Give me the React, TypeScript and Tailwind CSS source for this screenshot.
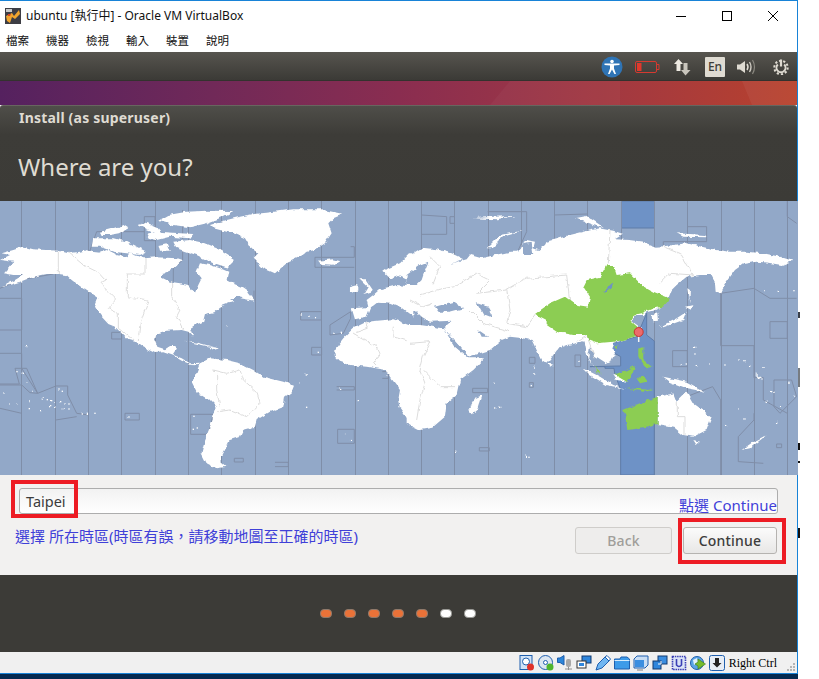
const UI = '"Noto Sans", "Noto Sans CJK TC", sans-serif';

const MENUS = ["檔案", "機器", "檢視", "輸入", "裝置", "說明"];

// polygons below are in 3x crop coordinates, the left and right half of the map each have their own origin
const TZ_X = [21, 55, 88, 121, 155, 188, 221, 255, 288, 321, 355, 388, 421, 454, 488, 521, 554, 587, 621, 654, 687, 721, 754, 787];

const LAND_LEFT = [
  "5,160 40,150 70,140 100,148 175,152 205,160 240,155 262,150 275,155 300,158 320,150 350,165 375,172 390,160 430,175 470,172 530,175 545,180 520,205 495,215 483,232 510,245 540,250 565,255 585,278 595,255 605,235 590,215 600,190 630,195 660,205 685,215 680,240 700,250 730,262 745,272 735,290 715,285 690,300 700,305 660,320 640,340 615,345 610,365 585,375 570,385 580,410 565,395 545,390 500,392 470,400 465,420 472,440 495,448 515,435 530,435 530,450 520,465 545,475 570,490 600,488 595,493 570,492 545,482 520,467 490,457 465,459 430,442 410,427 385,420 345,380 325,372 300,345 285,320 295,295 280,285 260,272 235,255 215,240 200,225 175,222 140,222 100,230 60,245 5,262 45,240 70,225 40,225 12,220 30,200 40,185 0,180 30,165",
  "630,75 680,60 720,50 760,42 800,38 880,28 960,28 1030,42 1000,55 985,70 995,100 975,130 945,150 920,155 900,170 860,190 825,220 790,205 760,175 775,160 750,140 735,115 700,100 680,95 640,85",
  "280,115 310,115 340,115 380,125 410,140 440,155 420,165 380,160 340,155 300,140 275,140",
  "300,95 330,88 370,75 385,85 360,100 330,105 305,105",
  "505,45 560,35 620,32 700,33 670,50 620,70 570,82 520,75 475,62",
  "415,75 440,68 470,80 490,105 460,98 440,90",
  "445,100 480,95 540,100 580,102 570,115 510,110 470,120 440,112",
  "520,125 570,120 610,128 650,145 690,170 705,180 690,195 680,205 650,195 620,180 590,165 560,155 530,145",
  "475,135 500,130 510,155 480,155",
  "955,182 1000,178 1022,183 1000,197 965,195",
  "1078,235 1095,235 1122,275 1092,285 1106,262",
  "1050,262 1075,255 1075,272 1050,275",
  "722,295 740,275 762,302",
  "550,422 600,430 655,445 610,436",
  "630,440 660,445 640,450",
  "600,490 630,475 680,480 720,490 760,510 790,530 850,545 882,557 875,575 855,590 850,620 810,635 770,660 765,680 730,690 720,710 690,720 675,750 660,780 682,800 650,805 620,790 605,760 615,720 630,680 650,620 630,600 590,575 575,545 590,515",
  "1003,450 1030,415 1060,385 1100,365 1180,358 1240,380 1240,670 1225,660 1200,625 1195,600 1200,570 1170,530 1160,510 1100,500 1050,495 1020,485 1005,470",
  "1105,320 1100,300 1120,285 1140,268 1190,255 1240,260 1240,350 1225,340 1200,320 1170,308 1135,305 1110,325 1100,350 1065,358 1055,325 1100,322",
  "1150,215 1165,205 1200,190 1230,160 1240,160 1240,225 1215,235 1195,225 1170,235",
];

const LAND_RIGHT = [
  "-10,375 30,375 100,385 135,440 175,475 225,475 190,510 150,540 140,585 110,610 105,650 70,680 25,688 0,675 -10,670",
  "-10,175 40,143 80,148 125,160 160,178 120,192 170,178 180,165 215,175 255,165 300,155 325,155 335,130 350,120 375,125 370,145 385,150 405,135 410,125 440,118 480,105 520,95 570,85 610,92 640,102 615,118 660,120 700,125 740,140 770,138 830,130 875,140 920,150 960,155 1010,155 1060,160 1110,170 1148,182 1115,195 1075,188 1040,185 1000,192 975,210 950,245 930,278 920,275 918,250 905,225 870,225 830,230 800,255 785,270 775,295 760,318 735,330 715,335 700,345 675,345 668,365 695,385 690,405 640,420 610,428 605,440 615,460 605,480 585,490 570,480 555,470 540,440 535,470 550,500 575,520 555,505 535,480 525,445 520,420 500,430 470,435 445,445 420,480 410,490 395,480 375,440 365,420 340,415 300,410 275,420 240,450 175,470 150,440 120,410 100,385 125,362 60,365 35,350 15,330 -10,330",
  "725,345 745,335 747,365 727,367",
  "750,380 800,355 830,335 820,360 760,382",
  "825,320 850,315 845,330",
  "832,265 840,270 838,310",
  "995,750 1030,725 1070,705 1020,745",
  "175,630 195,595 218,585 205,625 185,643",
  "415,490 428,495 420,500",
  "230,145 270,105 340,92 280,110 245,145",
  "190,55 250,50 320,48 260,58",
  "495,55 530,48 585,85 550,75",
  "800,100 885,105 890,112 820,110",
  "743,590 790,580 800,605 830,575 850,610 905,650 890,690 850,710 820,705 790,680 743,672",
  "760,530 830,545 885,575 830,565 780,545",
  "520,505 570,530 610,555 645,567 590,555 540,525",
  "610,525 640,530 650,545 620,540",
  "850,720 870,725 860,735",
  "1035,520 1060,540 1045,535",
];

const GREEN = [
  "375,342 420,310 465,290 500,315 535,320 540,290 520,260 530,240 570,230 590,195 610,195 620,225 660,220 695,255 730,275 780,295 760,320 730,325 695,340 670,345 665,365 695,390 690,405 640,420 610,425 560,430 535,420 530,405 490,405 440,395 410,375 410,360",
  "640,630 690,610 743,590 743,672 700,682 655,690 650,655",
  "615,525 650,510 675,498 665,530 650,545",
  "680,535 700,530 710,545 690,550",
  "685,450 700,445 700,480 725,500 710,505 685,470",
  "555,500 575,520 560,520",
  "650,565 730,570 700,575",
  "610,436 625,436 615,445",
];

const BAND = "710,340 710,405 733,423 733,825 632,825 632,568 615,525 612,505 585,505 585,500 540,500 632,498 632,470 605,455 605,430 680,410";

const WATER_RIGHT = [
  "-10,255 20,255 35,240 45,210 55,185 30,195 -10,225",
  "75,320 130,305 160,325 120,335 85,335",
  "200,310 235,320 245,355 220,345",
  "335,130 365,125 370,165 340,165",
  "115,400 170,465 135,440",
  "205,390 235,410 215,410",
];

const TZ_LEFT = [
  "0,295 65,295 65,390 0,390",
  "0,460 65,460 65,505 80,505 113,580 65,505 45,505 58,552 0,552",
  "0,555 65,555 90,578 113,580 168,558 203,558 203,585 230,640 265,645",
  "0,625 65,640",
  "168,660 230,650",
  "335,397 365,397 365,417 335,417 335,397",
  "375,640 418,640 418,660 375,660 375,640",
  "572,643 640,643 625,703 572,703 572,643",
  "825,787 865,787 865,800 825,800",
  "703,775 730,775 730,786 703,786 703,775",
  "902,335 964,335 964,360 902,360 902,335",
  "990,375 1052,335 1052,355 1030,400 990,405 990,375",
  "935,442 965,442 965,465 935,465 935,442",
  "1010,560 1063,560 1063,570 1010,570",
  "1013,688 1063,688 1063,730 1013,730 1013,688",
  "945,172 1063,172 1063,140 1052,140",
  "945,172 945,202 1063,202",
  "1147,515 1165,515 1165,535 1147,535",
  "433,50 465,50 465,122 433,122 433,50",
  "548,30 548,180 520,205 520,245",
  "265,165 290,95 433,95",
  "0,265 60,240 160,222",
  "762,272 762,302",
];

const TZ_RIGHT = [
  "34,45 110,50 110,103 34,103",
  "133,50 120,50 120,70 133,70",
  "233,35 350,35 350,95 325,150",
  "433,45 532,42",
  "760,140 760,125 890,125 890,80 832,80",
  "1132,0 1132,50 1160,70",
  "788,500 788,452 832,452 832,500 788,500",
  "932,437 1032,437 1032,533 1060,533 1060,600 1132,640",
  "932,437 932,280 1032,265 1080,295 1160,295",
  "1080,365 1080,415 1132,415 1132,365 1080,365",
  "1092,540 1145,540 1160,590 1110,640 1092,620 1092,540",
  "985,710 1032,660 1032,640",
  "985,710 985,785 1060,790",
  "830,590 908,560 932,600 932,825",
  "188,565 233,565 233,578 188,578 188,565",
  "208,743 238,743 238,753 208,753 208,743",
  "358,472 375,472 375,490 358,490 358,472",
  "358,548 370,548 370,562 358,562 358,548",
  "495,465 512,465 512,500 495,500 495,465",
  "1100,732 1115,732 1115,743 1100,743 1100,732",
];

// thin country borders on the land
const BORDERS_LEFT = [
  "175,152 175,222",
  "205,157 250,195 300,220 318,240 300,250 350,300 325,325 355,340 355,385 400,420",
  "435,175 435,222 382,222 382,290 445,300 420,370 415,420",
  "515,240 515,290 540,330 530,350 550,390",
  "640,510 680,520 720,510 730,540 770,575 780,610 740,650 690,630 655,635",
  "650,520 650,570 660,620",
  "1060,400 1130,440 1140,460 1120,490 1130,500",
  "1100,365 1105,385 1060,400",
  "1180,380 1178,410 1230,425",
];

const BORDERS_RIGHT = [
  "0,430 60,425 40,470 30,510 45,550 30,600 20,660",
  "30,285 80,270 130,260 200,220 240,240 200,280 290,270 350,235 470,225 480,310",
  "290,270 300,330 290,370 350,380 380,340",
  "180,330 220,370 300,395",
  "600,90 595,190",
  "750,250 780,220 850,225 810,160 760,140",
  "60,170 90,200 70,250",
  "0,300 40,320 70,310",
  "802,605 802,650 825,650 825,705",
  "500,425 530,405 555,475",
  "40,510 90,560 135,560",
];

const ISLANDS_LEFT = [[78,438],[52,510],[68,518],[78,548],[98,568],[10,577],[28,610],[50,612],[88,600],[83,627],[120,633],[125,595],[140,597],[150,600],[160,605],[180,603],[190,610],[205,610],[150,618],[165,620],[188,625],[205,625],[175,565],[185,572],[245,637],[260,638],[283,638],[385,652],[580,647],[578,683],[590,682],[683,378],[905,343],[925,347],[945,348],[1000,398],[1022,398],[950,455],[917,523],[896,546],[1017,563],[1073,600],[918,620],[1032,700],[1050,716],[1160,525]];
const ISLANDS_RIGHT = [[355,770],[345,767],[135,752],[253,548],[255,622],[267,620],[370,500],[372,520],[362,555],[505,482],[852,440],[850,460],[812,490],[830,490],[860,492],[895,490],[940,490],[985,475],[1000,480],[1020,495],[1060,500],[1040,520],[1080,570],[1090,575],[1070,605],[1110,620],[1150,590],[1135,545],[1095,665],[985,625],[1000,655],[945,672],[1060,270],[1100,272],[1150,270]];

function WorldMap() {
  return (
    <svg viewBox="0 201 798 274" className="block h-[274px] w-[798px]">
      <defs>
        {/* roughens the straight polygon edges into something like a coastline */}
        <filter id="coast" x="0" y="201" width="798" height="274" filterUnits="userSpaceOnUse" primitiveUnits="userSpaceOnUse">
          <feTurbulence type="fractalNoise" baseFrequency="0.16" numOctaves="2" seed="4" />
          <feDisplacementMap in="SourceGraphic" scale="4.5" xChannelSelector="R" yChannelSelector="G" />
        </filter>
      </defs>
      <rect x="0" y="201" width="798" height="274" fill="#92a8c8" />
      <polygon points="621.5,201 654.5,201 654.5,228 621.5,228" fill="#6e92c6" stroke="#5f7ca8" />
      {TZ_X.map((x) => (
        <line key={x} x1={x + 0.5} x2={x + 0.5} y1="201" y2="475" stroke="#7f8ea8" />
      ))}
      <g transform="translate(410,200) scale(0.3333)">
        <polygon points={BAND} fill="#6e92c6" stroke="#5f7ca8" strokeWidth="3" />
      </g>
      <g transform="translate(0,200) scale(0.3333)" fill="none" stroke="#7f8ea8" strokeWidth="3">
        {TZ_LEFT.map((p) => (
          <polyline key={p} points={p} />
        ))}
      </g>
      <g transform="translate(410,200) scale(0.3333)" fill="none" stroke="#7f8ea8" strokeWidth="3">
        {TZ_RIGHT.map((p) => (
          <polyline key={p} points={p} />
        ))}
      </g>
      <g filter="url(#coast)">
        <g transform="translate(0,200) scale(0.3333)">
          {LAND_LEFT.map((p) => (
            <polygon key={p} points={p} fill="#fff" />
          ))}
          {BORDERS_LEFT.map((p) => (
            <polyline key={p} points={p} fill="none" stroke="#dcdcdc" strokeWidth="3" />
          ))}
          {ISLANDS_LEFT.map(([x, y]) => (
            <rect key={`${x}-${y}`} x={x} y={y} width="4" height="4" fill="#fff" />
          ))}
        </g>
        <g transform="translate(410,200) scale(0.3333)">
          {LAND_RIGHT.map((p) => (
            <polygon key={p} points={p} fill="#fff" />
          ))}
          {WATER_RIGHT.map((p) => (
            <polygon key={p} points={p} fill="#92a8c8" />
          ))}
          {BORDERS_RIGHT.map((p) => (
            <polyline key={p} points={p} fill="none" stroke="#dcdcdc" strokeWidth="3" />
          ))}
          {GREEN.map((p) => (
            <polygon key={p} points={p} fill="#8ccd52" />
          ))}
          <polygon points="580,275 610,250 605,265 585,278" fill="#6e92c6" />
          {ISLANDS_RIGHT.map(([x, y]) => (
            <rect key={`${x}-${y}`} x={x} y={y} width="4" height="4" fill="#fff" />
          ))}
        </g>
      </g>
      <line x1="638.7" x2="638.7" y1="335" y2="342" stroke="#f4f4f4" strokeWidth="1.5" />
      <circle cx="638.7" cy="332" r="4.5" fill="#ec6b6b" stroke="#c8352e" />
    </svg>
  );
}

function VBoxIcon() {
  return (
    <svg viewBox="0 0 16 16" className="h-4 w-4 shrink-0">
      <rect width="16" height="16" fill="#3d3d44" />
      <rect x="1" y="1" width="6" height="3" fill="#c9c9c9" />
      <path d="M1 8 L7 5 L9 8 L14 2 L15 6 L10 11 L7 9 L5 15 L2 13 Z" fill="#f0a52e" />
      <path d="M3 6 L6 6 L5 8 L3 8 Z" fill="#d8421c" />
    </svg>
  );
}

function WindowButtons() {
  return (
    <div className="flex items-center">
      <svg viewBox="0 0 10 10" className="h-[10px] w-[10px]">
        <line x1="0" x2="10" y1="5.5" y2="5.5" stroke="#000" />
      </svg>
      <svg viewBox="0 0 10 10" className="ml-[36px] h-[10px] w-[10px]">
        <rect x="0.5" y="0.5" width="9" height="9" fill="none" stroke="#000" />
      </svg>
      <svg viewBox="0 0 10 10" className="ml-[36px] h-[10px] w-[10px]">
        <path d="M0 0 L10 10 M10 0 L0 10" stroke="#000" />
      </svg>
    </div>
  );
}

function TrayIcons() {
  return (
    <div className="flex items-center pt-[1px]">
      <svg viewBox="0 0 22 22" className="h-[22px] w-[22px]">
        <circle cx="11" cy="11" r="10.5" fill="#2f74b5" />
        <circle cx="11" cy="5.5" r="1.8" fill="#fff" />
        <path d="M3.5 7.5 L18.5 7.5 L18.5 9 L13 9.5 L13 12.5 L15 18 L13.4 18 L11 13.5 L8.6 18 L7 18 L9 12.5 L9 9.5 L3.5 9 Z" fill="#fff" />
      </svg>
      <svg viewBox="0 0 25 12" className="ml-[12px] h-[12px] w-[25px]">
        <rect x="0.5" y="0.5" width="21" height="11" rx="1.5" fill="none" stroke="#d63a30" />
        <rect x="2" y="2" width="4.5" height="8" fill="#e0392c" />
        <path d="M22 3.5 H24 V8.5 H22" fill="none" stroke="#d63a30" />
      </svg>
      <svg viewBox="0 0 18 18" className="ml-[13px] h-[18px] w-[18px]">
        <path d="M5.5 1 L10 6 L7.5 6 L7.5 13 L3.5 13 L3.5 6 L1 6 Z" fill="#eeeae2" />
        <path d="M10.5 5 L14.5 5 L14.5 12 L17.5 12 L12.5 17.5 L8 12 L10.5 12 Z" fill="#c9c5bc" />
      </svg>
      <div className="ml-[14px] flex h-5 w-5 items-center justify-center rounded-[1px] bg-[#dfdbd2] text-[12px] font-medium text-[#3c3b37]">
        En
      </div>
      <svg viewBox="0 0 20 16" className="ml-[12px] h-4 w-5">
        <path d="M0 5.5 H3 L8 2 V14 L3 10.5 H0 Z" fill="#dfdbd2" />
        <path d="M10 5 Q12 8 10 11" fill="none" stroke="#dfdbd2" strokeWidth="1.5" />
        <path d="M12.5 3 Q15.5 8 12.5 13" fill="none" stroke="#cfcbc2" strokeWidth="1.4" />
        <path d="M15.5 1 Q19.5 8 15.5 15" fill="none" stroke="#8a877f" strokeWidth="1.2" />
      </svg>
      <svg viewBox="0 0 16 16" className="ml-[16px] h-4 w-4">
        <circle cx="8" cy="8.5" r="6.7" fill="none" stroke="#dfdbd2" strokeWidth="2" strokeDasharray="2.2 2" />
        <path d="M4.8 5.5 A4.5 4.5 0 1 0 11.2 5.5" fill="none" stroke="#dfdbd2" strokeWidth="2" />
        <path d="M8 0.5 V7.5" stroke="#dfdbd2" strokeWidth="2.2" />
      </svg>
    </div>
  );
}

const STROKE = "#1f5fae";

function StatusIcons() {
  return (
    <div className="flex items-center gap-[3px]">
      <svg viewBox="0 0 16 16" className="h-4 w-4">
        <rect x="1" y="0.5" width="12" height="14" fill="#cfe2f7" stroke={STROKE} />
        <circle cx="7" cy="6.5" r="3.5" fill="#fff" stroke={STROKE} />
        <circle cx="11.5" cy="12" r="3.5" fill="#e0322a" />
      </svg>
      <svg viewBox="0 0 16 16" className="h-4 w-4">
        <circle cx="7.5" cy="7.5" r="7" fill="#dbe6f2" stroke={STROKE} />
        <circle cx="7.5" cy="7.5" r="2" fill="#fff" stroke={STROKE} />
        <circle cx="12" cy="12" r="3.5" fill="#4fb52e" />
      </svg>
      <svg viewBox="0 0 16 16" className="h-4 w-4">
        <path d="M0.5 3 H3 L7 0.5 V10 L3 7.5 H0.5 Z" fill="#2d86d8" stroke={STROKE} />
        <rect x="9" y="4" width="5" height="8" rx="2" fill="#a8a8a8" />
        <path d="M8 14 H15 M11.5 12 V15" stroke="#909090" />
      </svg>
      <svg viewBox="0 0 16 16" className="h-4 w-4">
        <rect x="6" y="1" width="9" height="7" fill="#2f86dc" stroke="#123a70" />
        <rect x="1" y="6" width="9" height="7" fill="#fff" stroke="#333" />
        <rect x="3" y="8" width="5" height="3" fill="#2f86dc" />
      </svg>
      <svg viewBox="0 0 16 16" className="h-4 w-4">
        <path d="M1 15 L3 9 L10 2 L14 6 L7 13 Z" fill="#6fb6f2" stroke={STROKE} />
        <path d="M10 2 L12 0.5 L15.5 4 L14 6 Z" fill="#fff" stroke={STROKE} />
      </svg>
      <svg viewBox="0 0 16 16" className="h-4 w-4">
        <path d="M0.5 14 V4 H6 L7 2 H13 L15.5 4 V14 Z" fill="#3d9be9" stroke={STROKE} />
        <path d="M0.5 5.5 H15.5" stroke="#d6ecfc" />
      </svg>
      <svg viewBox="0 0 16 16" className="h-4 w-4">
        <path d="M1 4 L4 1 H15 V10 L12 13 H1 Z" fill="#c8ddf4" stroke={STROKE} />
        <path d="M2 5 H11 V12 H2 Z" fill="#3b8ee0" />
        <path d="M4 15 H10" stroke="#808080" />
      </svg>
      <svg viewBox="0 0 16 16" className="h-4 w-4">
        <rect x="6" y="1" width="9" height="8" fill="#3b8ee0" stroke="#123a70" />
        <rect x="1" y="6" width="8" height="8" fill="#2f86dc" stroke="#123a70" />
        <path d="M6 9 H9 V6" fill="none" stroke="#fff" />
      </svg>
      <svg viewBox="0 0 16 16" className="h-4 w-4">
        <rect x="1.5" y="1.5" width="13" height="13" fill="#dbe4f7" stroke="#3a3fb5" strokeDasharray="1.5 0.8" strokeWidth="1.6" />
        <path d="M5.5 4 V10 Q8 13 10.5 10 V4" fill="none" stroke="#3a3fb5" strokeWidth="1.6" />
      </svg>
      <svg viewBox="0 0 16 16" className="h-4 w-4">
        <circle cx="7" cy="8" r="6.5" fill="#5ba5e5" stroke={STROKE} />
        <path d="M3 5 L7 3 L8 7 L4 10 Z" fill="#e3f1fb" />
        <path d="M8 4 L15.5 9 L8 14 V11 L5 9 L8 7 Z" fill="#75bb2c" stroke="#3f7d16" strokeWidth="0.6" />
      </svg>
      <svg viewBox="0 0 16 16" className="h-4 w-4">
        <rect x="0.5" y="0.5" width="15" height="15" rx="2" fill="#e6edf6" stroke={STROKE} />
        <path d="M6 3 H10 V8 H12.5 L8 12.5 L3.5 8 H6 Z" fill="#222" />
      </svg>
    </div>
  );
}

function Grip() {
  return (
    <svg viewBox="0 0 8 8" className="mb-[2px] ml-[10px] h-2 w-2 self-end">
      <g fill="#b5b5b5">
        <rect x="6" y="0" width="2" height="2" />
        <rect x="3" y="3" width="2" height="2" />
        <rect x="6" y="3" width="2" height="2" />
        <rect x="0" y="6" width="2" height="2" />
        <rect x="3" y="6" width="2" height="2" />
        <rect x="6" y="6" width="2" height="2" />
      </g>
    </svg>
  );
}

export default function App() {
  return (
    <div className="relative h-[679px] w-[819px] overflow-hidden bg-white" style={{ fontFamily: UI }}>
      <div className="flex h-[673px] w-[798px] flex-col border-t border-r border-[#1883d7]">
        <div className="flex h-[29px] shrink-0 items-center justify-between pr-[19px] pl-[5px]">
          <div className="flex items-center gap-[5px] text-[12px] text-[#111]">
            <VBoxIcon />
            <span>ubuntu [執行中] - Oracle VM VirtualBox</span>
          </div>
          <WindowButtons />
        </div>
        <div className="flex h-[22px] shrink-0 items-center gap-[17px] pl-[6px] text-[11.5px] text-[#111]">
          {MENUS.map((m) => (
            <span key={m}>{m}</span>
          ))}
        </div>

        <div className="flex h-[29px] shrink-0 items-center justify-end border-b border-[#33322e] bg-gradient-to-b from-[#57554f] to-[#3b3a36] pr-[8px]">
          <TrayIcons />
        </div>

        <div className="relative h-[24px] shrink-0 bg-gradient-to-r from-[#55215f] via-[#8a2d50] to-[#b8412b]">
          <svg viewBox="0 0 797 24" className="absolute inset-0 h-full w-full">
            <polygon points="490,24 510,0 620,0 620,24" fill="#ffffff" fillOpacity="0.03" />
            <polygon points="742,0 797,0 797,24 752,24" fill="#ffffff" fillOpacity="0.05" />
          </svg>
        </div>

        <div className="flex h-[96px] shrink-0 flex-col rounded-t-[3px] border-t border-[#67665f] bg-gradient-to-b from-[#4f4e49] via-[#3d3c38] via-30% to-[#3c3b37] pl-[18px]">
          <div className="mt-[1px] pl-[1px] text-[14px] font-bold tracking-[0.2px] text-[#dfdbd2]">Install (as superuser)</div>
          <div className="mt-[23px] text-[24px] leading-[32px] text-[#dfdbd2]">Where are you?</div>
        </div>

        <WorldMap />

        <div className="flex h-[100px] shrink-0 flex-col bg-[#f2f1f0]">
          <div className="mx-[19px] mt-[13px] flex h-[26px] items-center rounded-[3px] border border-[#adadad] bg-gradient-to-b from-[#f2f2f2] to-white pt-[1px] pl-[6px] text-[14.5px] text-[#3c3c3c]">
            Taipei
          </div>
          <div className="mt-[13px] flex justify-end gap-[11px] pr-[20px] text-[14px]">
            <div className="flex h-[27px] w-[97px] items-center justify-center rounded-[3px] border border-[#cfcdca] bg-[#eeedec] font-medium tracking-[0.2px] text-[#a09e9a]">
              Back
            </div>
            <div className="flex h-[27px] w-[94px] items-center justify-center rounded-[3px] border border-[#b5b3b0] bg-gradient-to-b from-[#fbfbfb] to-[#e8e7e6] font-medium tracking-[0.2px] text-[#3c3c3c]">
              Continue
            </div>
          </div>
        </div>

        <div className="flex h-[77px] shrink-0 items-center justify-center gap-3 bg-[#3c3b37] pr-[2px]">
          {["a", "b", "c", "d", "e"].map((k) => (
            <div key={k} className="h-[9px] w-3 rounded-[4px] border border-[#8e7a6c] bg-[#ea7238]" />
          ))}
          {["f", "g"].map((k) => (
            <div key={k} className="h-[9px] w-3 rounded-[4px] border border-[#9a9a96] bg-white" />
          ))}
        </div>

        <div className="flex flex-1 items-center justify-end bg-[#f0f0f0] pr-[2px] pl-[2px]">
          <StatusIcons />
          <span className="ml-[4px] text-[12px] text-black" style={{ fontFamily: '"Liberation Serif", serif' }}>
            Right Ctrl
          </span>
          <Grip />
        </div>
      </div>
      <div className="h-[6px] w-[798px] border-t border-[#1883d7] bg-[#04294f]" />

      {/* bits of whatever sits behind the window, showing at its right edge */}
      <div className="absolute top-[312px] left-[798px] h-[6px] w-[2px] bg-[#3a3f48]" />
      <div className="absolute top-[368px] left-[798px] h-[19px] w-[2px] bg-[#777c82]" />
      <div className="absolute top-[443px] left-[798px] h-[7px] w-[2px] bg-[#111]" />
      <div className="absolute top-[461px] left-[798px] h-[2px] w-[2px] bg-[#111]" />
      <div className="absolute top-[528px] left-[798px] h-[10px] w-[2px] bg-[#111]" />

      {/* hand-drawn annotations sitting on top of the screenshot */}
      <div className="absolute top-[480px] left-[11px] h-[38px] w-[67px] border-[4px] border-[#ed1c24]" />
      <div className="absolute top-[518px] left-[678px] h-[46px] w-[108px] border-[4px] border-[#ed1c24]" />
      <div className="absolute top-[495px] left-[679px] text-[15px] leading-[20px] text-[#4040d8]">點選 Continue</div>
      <div className="absolute top-[526px] left-[15px] text-[15px] leading-[20px] text-[#4040d8]">
        {"選擇 所在時區(時區有誤\uFF0C請移動地圖至正確的時區)"}
      </div>
    </div>
  );
}
